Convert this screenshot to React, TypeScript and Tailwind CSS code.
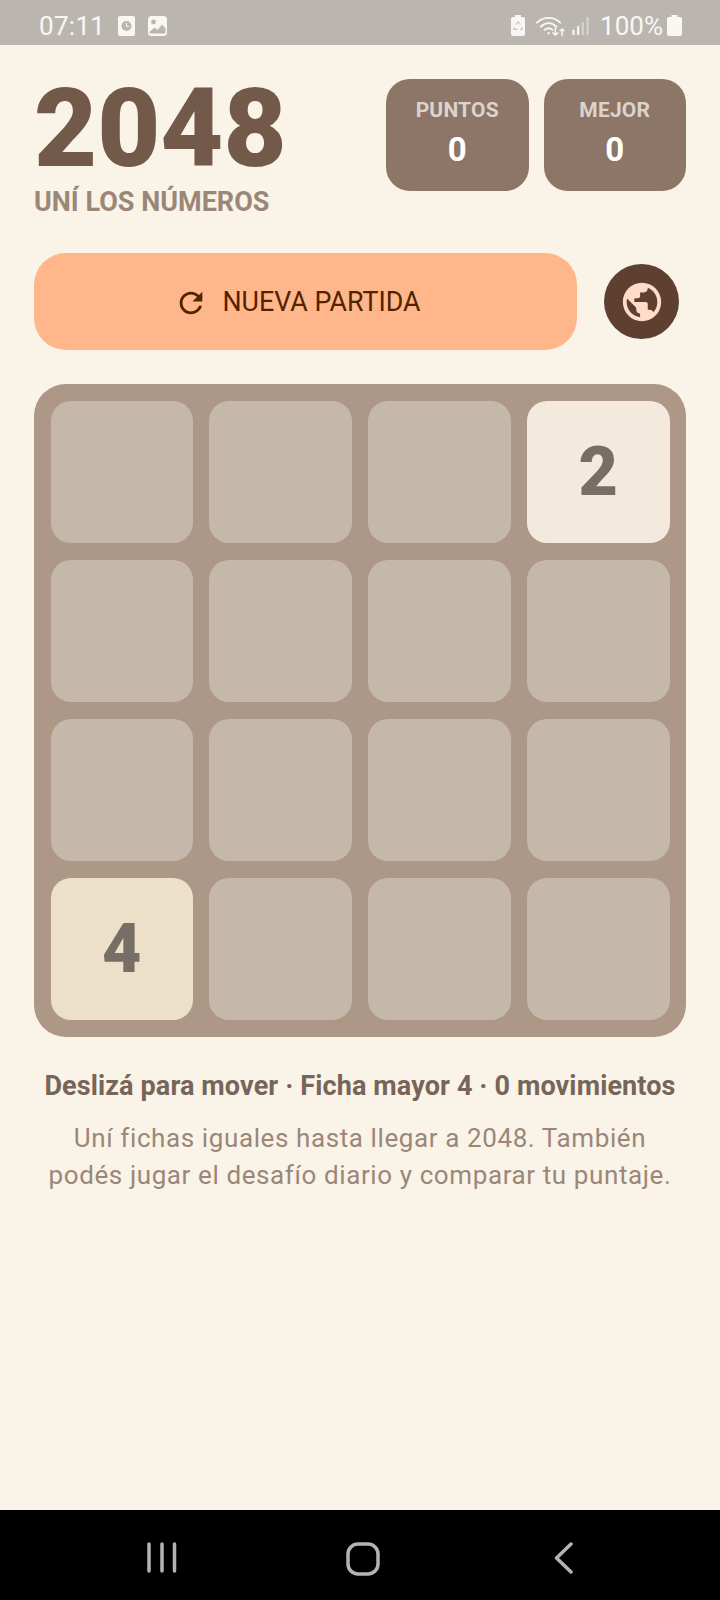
const board = [
  [0, 0, 0, 2],
  [0, 0, 0, 0],
  [0, 0, 0, 0],
  [4, 0, 0, 0],
]

const tileStyles: Record<number, string> = {
  0: 'bg-[#c5b7aa]',
  2: 'bg-[#f3e9dd]',
  4: 'bg-[#ece0c8]',
}

const StatusBar = () => (
  <div className="flex h-[45px] shrink-0 items-center bg-[#bab6af] pl-[39px] pr-[38px] pt-[6px] text-[#f9f7f3]">
    <span className="text-[26px] leading-none tracking-[0.3px]">07:11</span>
    <svg width="17" height="20" viewBox="0 0 17 20" className="ml-[13px]">
      <path d="M2 0h13a2 2 0 0 1 2 2v16a2 2 0 0 1-2 2H2a2 2 0 0 1-2-2V2a2 2 0 0 1 2-2z" fill="#f9f7f3" />
      <circle cx="8.500" cy="10" r="5" fill="#bab6af" />
      <path d="M8.500 7v3.400h2.600" stroke="#f9f7f3" strokeWidth="1" fill="none" />
    </svg>
    <svg width="19" height="20" viewBox="0 0 19 20" className="ml-[13px]">
      <rect width="19" height="20" rx="3.500" fill="#f9f7f3" />
      <circle cx="5.500" cy="6" r="2.400" fill="#bab6af" />
      <path d="M1.500 16l5-4.500 3 2.500 4.500-5.500 3.500 4V16c0 1-.6 1.600-1.600 1.600H3c-1 0-1.500-.6-1.500-1.600z" fill="#bab6af" />
    </svg>
    <div className="flex-1" />
    <svg width="14" height="21" viewBox="0 0 14 22" preserveAspectRatio="none">
      <path d="M4 0h6v2h2a2 2 0 0 1 2 2v16a2 2 0 0 1-2 2H2a2 2 0 0 1-2-2V4a2 2 0 0 1 2-2h2z" fill="#f9f7f3" />
      <path d="M5 10l2-3 2 3M3.500 13l-1 2h4M9 15h2.500l-1-2" stroke="#bab6af" strokeWidth="1" fill="none" />
    </svg>
    <svg width="30" height="22" viewBox="0 0 31 22" className="ml-[11px]" fill="none" stroke="#f9f7f3" strokeLinecap="round">
      <path d="M1 7.500C8 1 18 1 25 7.500" strokeWidth="2" />
      <path d="M5 11.500C10 7 16 7 21 11.500" strokeWidth="2" />
      <path d="M9 15c3-2.500 5-2.500 8 0" strokeWidth="2" />
      <circle cx="13" cy="18.500" r="1.200" fill="#f9f7f3" stroke="none" />
      <path d="M20 12.500v8M17.500 18l2.500 2.500 2.500-2.500" strokeWidth="1.500" />
      <path d="M27 21v-7M25 16l2-2 2 2" strokeWidth="1.500" />
    </svg>
    <svg width="17" height="18" viewBox="0 0 19 21" className="ml-[6px]" fill="#f9f7f3">
      <rect x="0" y="15" width="2.500" height="6" rx="0.500" />
      <rect x="5.500" y="10.500" width="2.500" height="10.500" rx="0.500" />
      <rect x="11" y="6" width="2.500" height="15" rx="0.500" opacity="0.45" />
      <rect x="16.500" y="0" width="2.500" height="21" rx="0.500" opacity="0.45" />
    </svg>
    <span className="ml-[11px] text-[26px] leading-none">100%</span>
    <svg width="15" height="21" viewBox="0 0 15 22" className="ml-[4px]" preserveAspectRatio="none">
      <path d="M4.500 0h6v2H13a2 2 0 0 1 2 2v16a2 2 0 0 1-2 2H2a2 2 0 0 1-2-2V4a2 2 0 0 1 2-2h2.500z" fill="#f9f7f3" />
    </svg>
  </div>
)

const ScoreBox = ({ label, value }: { label: string; value: number }) => (
  <div className="flex h-[112px] w-[142.500px] flex-col items-center rounded-[24px] bg-[#8d7668] pt-[18px]">
    <span className="text-[21px] font-bold leading-[26px] tracking-[0.2px] text-[#dcd3cd]">{label}</span>
    <span className="mt-[7px] text-[33px] font-bold leading-[40px] text-white">{value}</span>
  </div>
)

const App = () => {
  return (
    <div className="flex h-[1600px] w-[720px] flex-col overflow-hidden bg-[#faf3e8] font-['Roboto',sans-serif]">
      <StatusBar />

      <main className="flex flex-1 flex-col px-[34px]">
        <header className="mt-[34px] flex items-start justify-between">
          <div>
            <h1 className="mt-[3px] text-[109px] font-black leading-[95px] text-[#72594a]">2048</h1>
            <p className="mt-[9px] text-[27px] font-bold leading-[32px] text-[#9b8778]">UNÍ LOS NÚMEROS</p>
          </div>
          <div className="flex gap-[15px]">
            <ScoreBox label="PUNTOS" value={0} />
            <ScoreBox label="MEJOR" value={0} />
          </div>
        </header>

        <div className="mt-[35px] flex items-center">
          <button className="flex h-[97px] w-[543px] items-center justify-center gap-[14px] rounded-[32px] bg-[#ffb68b] pr-[16px] pt-[2px] text-[#522300]">
            <svg width="34" height="34" viewBox="0 0 24 24" fill="currentColor">
              <path d="M17.65 6.35C16.2 4.9 14.21 4 12 4c-4.42 0-7.99 3.58-7.99 8s3.57 8 7.99 8c3.73 0 6.84-2.55 7.73-6h-2.08c-.82 2.33-3.04 4-5.65 4-3.31 0-6-2.69-6-6s2.69-6 6-6c1.66 0 3.14.69 4.22 1.78L13 11h7V4l-2.35 2.35z" />
            </svg>
            <span className="text-[26.800px] font-[450] leading-none">NUEVA PARTIDA</span>
          </button>
          <button className="ml-[27px] flex h-[75px] w-[75px] items-center justify-center rounded-full bg-[#5d4030]">
            <svg width="46" height="46" viewBox="0 0 24 24" fill="#ffdbca">
              <path d="M12 2C6.48 2 2 6.48 2 12s4.48 10 10 10 10-4.48 10-10S17.52 2 12 2zm-1 17.93c-3.95-.49-7-3.85-7-7.93 0-.62.08-1.21.21-1.79L9 15v1c0 1.1.9 2 2 2v1.93zm6.9-2.54c-.26-.81-1-1.39-1.9-1.39h-1v-3c0-.55-.45-1-1-1H8v-2h2c.55 0 1-.45 1-1V7h2c1.1 0 2-.9 2-2v-.41c2.93 1.19 5 4.06 5 7.41 0 2.08-.8 3.97-2.1 5.39z" />
            </svg>
          </button>
        </div>

        <div className="mt-[34px] grid h-[653px] w-[652px] grid-cols-4 grid-rows-4 gap-[16.500px] rounded-[32px] bg-[#ad9787] p-[16.500px] pb-[17px]">
          {board.flat().map((value, i) => (
            <div
              key={i}
              className={`flex items-center justify-center rounded-[20px] ${tileStyles[value]}`}
            >
              {value > 0 && <span className="text-[68px] font-black leading-none text-[#776e65]">{value}</span>}
            </div>
          ))}
        </div>

        <p className="mt-[33px] text-center text-[27px] font-bold leading-[32px] tracking-[0.12px] text-[#776559]">
          Deslizá para mover · Ficha mayor 4 · 0 movimientos
        </p>
        <p className="mt-[18px] text-center text-[26px] leading-[37px] tracking-[0.6px] text-[#9b8778]">
          Uní fichas iguales hasta llegar a 2048. También
          <br />
          podés jugar el desafío diario y comparar tu puntaje.
        </p>
      </main>

      <nav className="flex h-[90px] shrink-0 bg-black pt-[32px]">
        <div className="ml-[147px] h-[32px]">
          <svg width="30" height="32" viewBox="0 0 30 32" stroke="#b3b3b3" strokeWidth="3.500" strokeLinecap="round">
            <path d="M2 2v27M15 2v27M27.500 2v27" />
          </svg>
        </div>
        <svg width="34" height="34" viewBox="0 0 34 34" className="ml-[169px]" fill="none" stroke="#b3b3b3" strokeWidth="3.500">
          <rect x="2" y="2" width="30" height="30" rx="10" />
        </svg>
        <svg width="20" height="32" viewBox="0 0 20 32" className="ml-[174px]" fill="none" stroke="#b3b3b3" strokeWidth="3.500" strokeLinecap="round" strokeLinejoin="round">
          <path d="M17 2L2.500 16 17 30" />
        </svg>
      </nav>
    </div>
  )
}

export default App
